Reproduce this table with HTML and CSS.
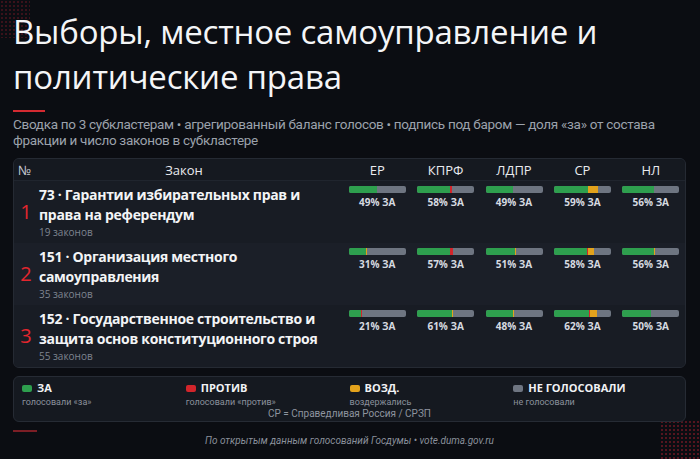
FILE: index.html
```html
<!DOCTYPE html>
<html lang="ru">
<head>
<meta charset="utf-8">
<title>Выборы, местное самоуправление и политические права</title>
<link rel="stylesheet" href="styles.css">
</head>
<body>
<div class="deco deco-tl"></div>
<div class="deco deco-br"></div>
<main class="page">
  <h1 class="title">Выборы, местное самоуправление и политические права</h1>
  <div class="accent"></div>
  <p class="subtitle">Сводка по 3 субкластерам • агрегированный баланс голосов • подпись под баром — доля «за» от состава фракции и число законов в субкластере</p>

  <section class="table">
    <div class="row head">
      <div class="c-num">№</div>
      <div class="c-law">Закон</div>
      <div class="c-party">ЕР</div>
      <div class="c-party">КПРФ</div>
      <div class="c-party">ЛДПР</div>
      <div class="c-party">СР</div>
      <div class="c-party">НЛ</div>
    </div>

    <div class="row body odd">
      <div class="c-num rank">1</div>
      <div class="c-law">
        <div class="law-title">73 · Гарантии избирательных прав и права на референдум</div>
        <div class="law-count">19 законов</div>
      </div>
      <div class="c-party"><div class="bar"><span class="s-for" style="width:49%"></span></div><div class="pct">49% ЗА</div></div>
      <div class="c-party"><div class="bar"><span class="s-for" style="width:58%"></span><span class="s-against" style="width:4%"></span></div><div class="pct">58% ЗА</div></div>
      <div class="c-party"><div class="bar"><span class="s-for" style="width:49%"></span></div><div class="pct">49% ЗА</div></div>
      <div class="c-party"><div class="bar"><span class="s-for" style="width:59%"></span><span class="s-against" style="width:1.5%"></span><span class="s-abst" style="width:17%"></span></div><div class="pct">59% ЗА</div></div>
      <div class="c-party"><div class="bar"><span class="s-for" style="width:56%"></span></div><div class="pct">56% ЗА</div></div>
    </div>

    <div class="row body even">
      <div class="c-num rank">2</div>
      <div class="c-law">
        <div class="law-title">151 · Организация местного самоуправления</div>
        <div class="law-count">35 законов</div>
      </div>
      <div class="c-party"><div class="bar"><span class="s-for" style="width:31%"></span><span class="s-abst" style="width:1.5%"></span></div><div class="pct">31% ЗА</div></div>
      <div class="c-party"><div class="bar"><span class="s-for" style="width:57%"></span><span class="s-against" style="width:6%"></span></div><div class="pct">57% ЗА</div></div>
      <div class="c-party"><div class="bar"><span class="s-for" style="width:51%"></span><span class="s-abst" style="width:1.5%"></span></div><div class="pct">51% ЗА</div></div>
      <div class="c-party"><div class="bar"><span class="s-for" style="width:58%"></span><span class="s-against" style="width:2%"></span><span class="s-abst" style="width:10%"></span></div><div class="pct">58% ЗА</div></div>
      <div class="c-party"><div class="bar"><span class="s-for" style="width:56%"></span><span class="s-abst" style="width:2%"></span></div><div class="pct">56% ЗА</div></div>
    </div>

    <div class="row body odd">
      <div class="c-num rank">3</div>
      <div class="c-law">
        <div class="law-title">152 · Государственное строительство и защита основ конституционного строя</div>
        <div class="law-count">55 законов</div>
      </div>
      <div class="c-party"><div class="bar"><span class="s-for" style="width:21%"></span><span class="s-against" style="width:2%"></span></div><div class="pct">21% ЗА</div></div>
      <div class="c-party"><div class="bar"><span class="s-for" style="width:61%"></span><span class="s-abst" style="width:1.5%"></span></div><div class="pct">61% ЗА</div></div>
      <div class="c-party"><div class="bar"><span class="s-for" style="width:48%"></span><span class="s-abst" style="width:1.5%"></span></div><div class="pct">48% ЗА</div></div>
      <div class="c-party"><div class="bar"><span class="s-for" style="width:62%"></span><span class="s-against" style="width:1.5%"></span><span class="s-abst" style="width:13%"></span></div><div class="pct">62% ЗА</div></div>
      <div class="c-party"><div class="bar"><span class="s-for" style="width:50%"></span></div><div class="pct">50% ЗА</div></div>
    </div>
  </section>

  <section class="legend">
    <div class="legend-items">
      <div class="legend-item">
        <div class="legend-label"><span class="swatch sw-for"></span>ЗА</div>
        <div class="legend-sub">голосовали «за»</div>
      </div>
      <div class="legend-item">
        <div class="legend-label"><span class="swatch sw-against"></span>ПРОТИВ</div>
        <div class="legend-sub">голосовали «против»</div>
      </div>
      <div class="legend-item">
        <div class="legend-label"><span class="swatch sw-abst"></span>ВОЗД.</div>
        <div class="legend-sub">воздержались</div>
      </div>
      <div class="legend-item">
        <div class="legend-label"><span class="swatch sw-none"></span>НЕ ГОЛОСОВАЛИ</div>
        <div class="legend-sub">не голосовали</div>
      </div>
    </div>
    <div class="legend-note">СР = Справедливая Россия / СРЗП</div>
  </section>

  <div class="accent accent-dark"></div>
  <p class="footer">По открытым данным голосований Госдумы • vote.duma.gov.ru</p>
</main>
</body>
</html>
```

FILE: styles.css
```css
* { box-sizing: border-box; }

html, body {
  margin: 0;
  padding: 0;
}

body {
  position: relative;
  width: 700px;
  height: 459px;
  overflow: hidden;
  background: #0b0d12;
  color: #eef0f3;
  font-family: "Open Sans", "Noto Sans", sans-serif;
}

.deco {
  position: absolute;
  background-image: radial-gradient(circle, rgba(200, 34, 52, 0.55) 0.9px, transparent 1.3px);
  background-size: 4px 4px;
}
.deco-tl {
  left: 0;
  top: 0;
  width: 30px;
  height: 38px;
  opacity: 0.45;
}
.deco-br {
  right: 0;
  bottom: 0;
  width: 40px;
  height: 39px;
  opacity: 0.7;
}

.page {
  position: relative;
  padding: 9px 14px 0 13px;
}

.title {
  margin: 0;
  font-family: "Open Sans", sans-serif;
  font-weight: 400;
  font-size: 33px;
  line-height: 45px;
  color: #f4f5f7;
  letter-spacing: -0.2px;
}

.accent {
  width: 32px;
  height: 2px;
  margin-top: 11px;
  background: #d42a31;
}

.subtitle {
  margin: 4px 0 0;
  font-family: "Roboto", sans-serif;
  font-size: 13.5px;
  line-height: 16px;
  letter-spacing: -0.3px;
  color: #9ca2ac;
}

.table {
  margin-top: 10px;
  border: 1px solid #252a33;
  border-radius: 6px;
  background: #171b23;
  overflow: hidden;
}

.row {
  display: grid;
  grid-template-columns: 19px 1fr repeat(5, 68.4px);
}

.head {
  height: 22px;
  align-items: center;
  background: #151920;
  border-bottom: 1px solid #20252e;
  font-size: 13px;
  color: #e9ebef;
}
.head .c-num {
  padding-left: 4px;
  font-size: 13px;
  color: #c9cdd4;
}
.head .c-law {
  text-align: center;
}
.head .c-party {
  text-align: center;
}

.body {
  padding: 4px 0 4px;
}
.body.odd { background: #181c24; }
.body.even { background: #1b1f28; }

.rank {
  align-self: center;
  text-align: center;
  font-size: 20px;
  font-weight: 400;
  color: #e3262e;
  line-height: 20px;
  padding-left: 5px;
}

.c-law {
  padding-left: 6px;
  padding-right: 14px;
}

.law-title {
  font-weight: 700;
  font-size: 14px;
  line-height: 20px;
  letter-spacing: -0.3px;
  color: #f3f4f6;
}

.law-count {
  font-size: 10px;
  line-height: 14px;
  color: #7f8590;
}

.body .c-party {
  display: flex;
  flex-direction: column;
  align-items: center;
  padding-top: 1px;
}

.bar {
  display: flex;
  width: 57px;
  height: 7px;
  border-radius: 2px;
  overflow: hidden;
  background: #6e7581;
}
.bar span { display: block; height: 100%; }
.s-for { background: #2e9f4e; }
.s-against { background: #d2252b; }
.s-abst { background: #e2a21c; }

.pct {
  margin-top: 3px;
  font-size: 10px;
  font-weight: 700;
  line-height: 12px;
  color: #d6dae0;
}

.legend {
  margin-top: 8px;
  padding: 3px 8px 1px;
  border: 1px solid #262b34;
  border-radius: 6px;
  background: #151920;
}

.legend-items {
  display: grid;
  grid-template-columns: repeat(4, 1fr);
}

.legend-label {
  display: flex;
  align-items: center;
  gap: 5px;
  font-size: 11px;
  font-weight: 700;
  line-height: 16px;
  color: #f1f2f4;
}

.swatch {
  width: 10px;
  height: 7px;
  border-radius: 2px;
}
.sw-for { background: #2e9f4e; }
.sw-against { background: #d2252b; }
.sw-abst { background: #e2a21c; }
.sw-none { background: #6e7581; }

.legend-sub {
  font-family: "Roboto", sans-serif;
  font-size: 9px;
  line-height: 12px;
  color: #8b919c;
}

.legend-note {
  text-align: center;
  font-family: "Roboto", sans-serif;
  font-size: 10px;
  line-height: 12px;
  color: #8e949f;
}

.accent-dark {
  width: 24px;
  margin-top: 8px;
  background: #7c1e25;
}

.footer {
  margin: 2px 0 0;
  text-align: center;
  font-family: "Roboto", sans-serif;
  font-style: italic;
  font-size: 10px;
  line-height: 14px;
  color: #8a909b;
}
```
